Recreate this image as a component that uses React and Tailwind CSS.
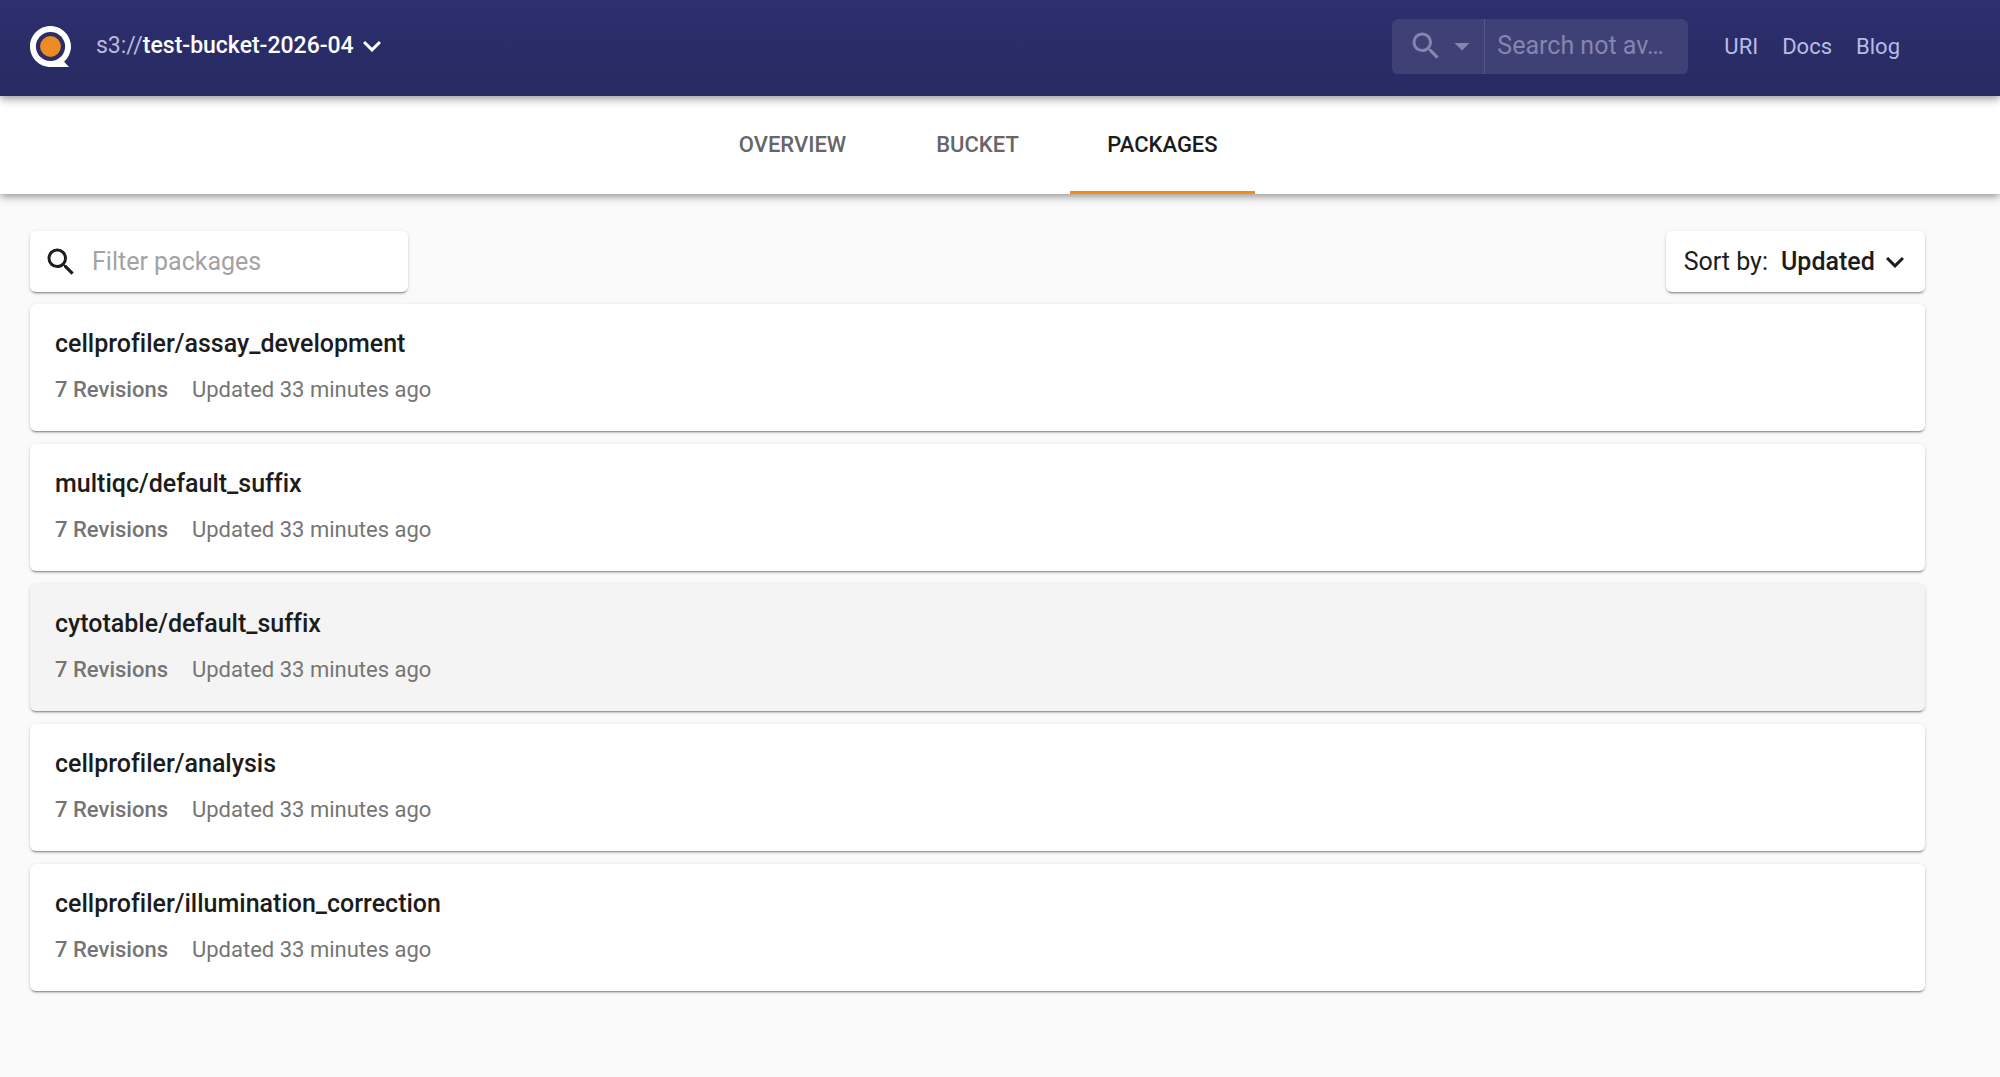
import { MdSearch, MdExpandMore, MdArrowDropDown } from "react-icons/md";

const packages = [
  { name: "cellprofiler/assay_development" },
  { name: "multiqc/default_suffix" },
  { name: "cytotable/default_suffix", active: true },
  { name: "cellprofiler/analysis" },
  { name: "cellprofiler/illumination_correction" },
];

const tabs = ["Overview", "Bucket", "Packages"];

const cardShadow =
  "shadow-[0_3px_1px_-2px_rgba(0,0,0,0.25),0_2px_2px_0_rgba(0,0,0,0.14),0_1px_4px_0_rgba(0,0,0,0.12)]";

function Logo() {
  return (
    <svg viewBox="0 0 41 41" className="size-[41px]" aria-hidden="true">
      <path
        d="M20.5 0C9.2 0 0 9.2 0 20.5S9.2 41 20.5 41H39l-4.9-5.2A20.5 20.5 0 0 0 20.5 0Z"
        fill="#fff"
      />
      <circle cx="20.5" cy="20.5" r="14.6" fill="#2b2d69" />
      <circle cx="20.5" cy="20.5" r="10.4" fill="#ec8c24" />
    </svg>
  );
}

function Header() {
  return (
    <header className="relative z-20 h-24 bg-linear-to-b from-[#2d2f6f] to-[#282a62] px-[30px] pr-[100px] flex items-center justify-between pb-1 shadow-[0_3px_6px_-1px_rgba(0,0,0,0.2),0_5px_8px_0_rgba(0,0,0,0.14),0_1px_14px_0_rgba(0,0,0,0.12)]">
      <div className="flex items-center gap-[25px]">
        <a href="#home" aria-label="Home">
          <Logo />
        </a>
        <button type="button" className="flex items-center text-[23px] font-medium text-white">
          <span>
            <span className="font-normal text-[#b9badb]">s3://</span>test-bucket-2026-04
          </span>
          <MdExpandMore className="size-9" />
        </button>
      </div>
      <div className="flex items-center gap-9">
        <div className="flex h-[55px] w-[296px] overflow-hidden rounded-md bg-[#3e4076] text-[#8486ae]">
          <button
            type="button"
            disabled
            aria-label="Search options"
            className="flex w-[93px] shrink-0 items-center border-r border-[#55578a] pl-4"
          >
            <MdSearch className="size-9" />
            <MdArrowDropDown className="size-9" />
          </button>
          <input
            type="text"
            disabled
            aria-label="Search"
            placeholder="Search not av…"
            className="min-w-0 flex-1 px-3 text-[25px] placeholder:text-[#8486ae]"
          />
        </div>
        <nav className="flex gap-6 text-[22px] text-[#b9bbe4]">
          <a href="#uri">URI</a>
          <a href="#docs">Docs</a>
          <a href="#blog">Blog</a>
        </nav>
      </div>
    </header>
  );
}

function Tabs() {
  return (
    <nav className="relative z-10 flex h-[98px] justify-center bg-white pr-[45px] text-[22px] font-medium uppercase shadow-[0_3px_6px_-1px_rgba(0,0,0,0.2),0_4px_8px_0_rgba(0,0,0,0.14),0_1px_12px_0_rgba(0,0,0,0.12)]">
      {tabs.map((tab) => (
        <a
          key={tab}
          href={`#${tab.toLowerCase()}`}
          className={
            tab === "Packages"
              ? "flex w-[185px] items-center justify-center border-b-3 border-[#f78c0c] pt-0.5 text-[#1c1c1c]"
              : "flex w-[185px] items-center justify-center border-b-3 border-transparent pt-0.5 text-[#666]"
          }
        >
          {tab}
        </a>
      ))}
    </nav>
  );
}

function PackageCard({ name, active }) {
  return (
    <li>
      <a
        href={`#${name}`}
        className={`block h-[127px] rounded-md px-[25px] pt-6 ${cardShadow} ${active ? "bg-[#f4f4f4]" : "bg-white"}`}
      >
        <h2 className="text-[25px] leading-8 font-medium text-[#1c1c1c]">{name}</h2>
        <p className="mt-[14px] flex gap-6 text-[22px] leading-8 text-[#757575]">
          <span className="font-medium">7 Revisions</span>
          <span>Updated 33 minutes ago</span>
        </p>
      </a>
    </li>
  );
}

export default function App() {
  return (
    <div className="min-h-screen bg-[#fafafa] font-[Roboto,sans-serif] [font-variant-ligatures:none]">
      <Header />
      <Tabs />
      <main className="pt-[37px] pr-[75px] pb-16 pl-[30px] text-[25px] text-[#1c1c1c]">
        <div className="flex justify-between">
          <label className={`flex h-[61px] w-[378px] items-center gap-[13px] rounded-md bg-white px-[13px] ${cardShadow}`}>
            <MdSearch className="size-9 shrink-0" />
            <input
              type="text"
              aria-label="Filter packages"
              placeholder="Filter packages"
              className="min-w-0 flex-1 outline-none placeholder:text-[#a3a3a3]"
            />
          </label>
          <label className={`flex h-[61px] items-center rounded-md bg-white pr-3 pl-[18px] ${cardShadow}`}>
            Sort by:
            <select className="ml-[13px] appearance-none pr-[38px] font-medium" defaultValue="Updated">
              <option>Updated</option>
              <option>Name</option>
            </select>
            <MdExpandMore className="pointer-events-none -ml-9 size-9" />
          </label>
        </div>
        <ul className="mt-3 flex flex-col gap-[13px]">
          {packages.map((pkg) => (
            <PackageCard key={pkg.name} {...pkg} />
          ))}
        </ul>
      </main>
    </div>
  );
}
